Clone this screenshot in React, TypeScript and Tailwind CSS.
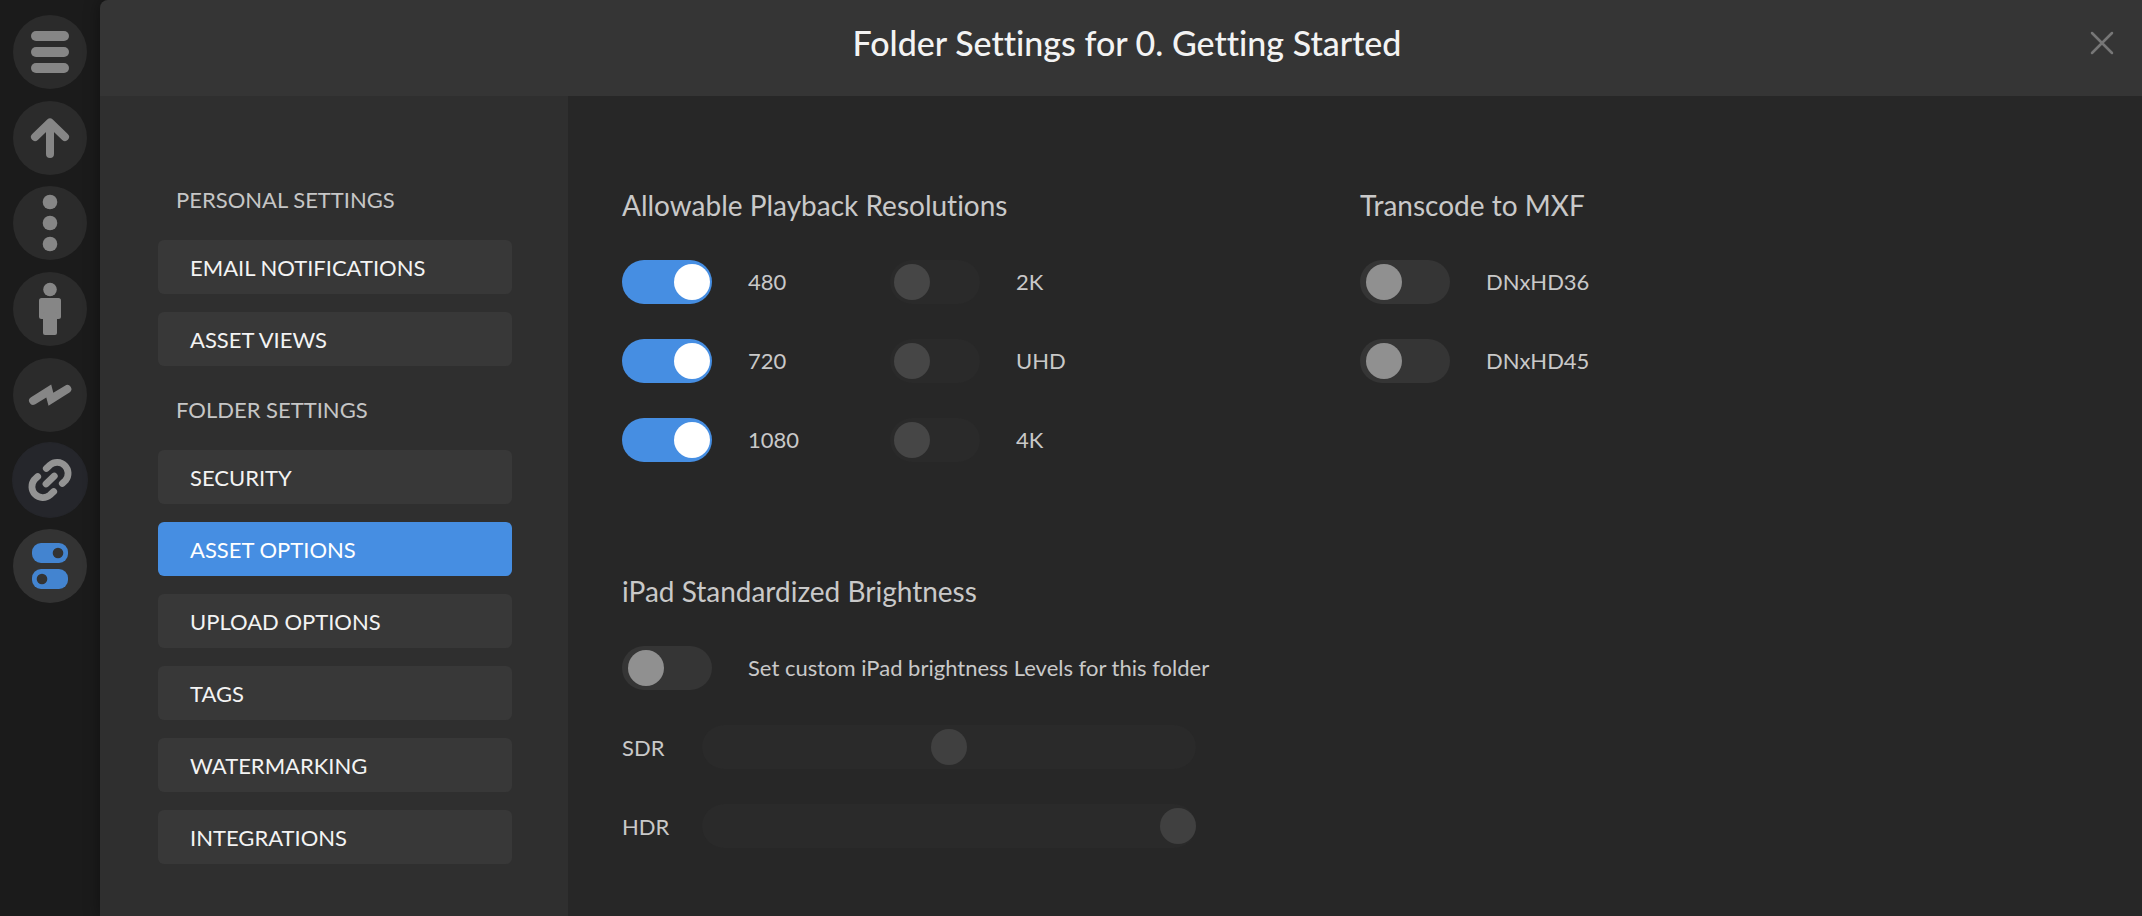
import React, { useState } from "react";
import clsx from "clsx";

type RailItem = {
  label: string;
  className: string;
  icon: React.ReactNode;
};

const railItems: RailItem[] = [
  {
    label: "Menu",
    className: "bg-[#2b2b2b] text-[#868686]",
    icon: (
      <g fill="currentColor">
        <rect x="18" y="16" width="38" height="10" rx="5" />
        <rect x="18" y="32" width="38" height="10" rx="5" />
        <rect x="18" y="48" width="38" height="10" rx="5" />
      </g>
    ),
  },
  {
    label: "Up one level",
    className: "bg-[#2b2b2b] text-[#868686]",
    icon: (
      <path
        d="M22 36 37 21.500 52 36M37 23V53"
        fill="none"
        stroke="currentColor"
        strokeWidth="8"
        strokeLinecap="round"
        strokeLinejoin="round"
      />
    ),
  },
  {
    label: "More",
    className: "bg-[#2b2b2b] text-[#868686]",
    icon: (
      <g fill="currentColor">
        <circle cx="37" cy="16" r="7.300" />
        <circle cx="37" cy="37" r="7.300" />
        <circle cx="37" cy="58" r="7.300" />
      </g>
    ),
  },
  {
    label: "People",
    className: "bg-[#2b2b2b] text-[#868686]",
    icon: (
      <g fill="currentColor">
        <circle cx="37" cy="17.500" r="6.800" />
        <rect x="26" y="26" width="22" height="21" rx="2.500" />
        <rect x="30" y="40" width="14" height="23" rx="2" />
      </g>
    ),
  },
  {
    label: "Activity",
    className: "bg-[#2b2b2b] text-[#868686]",
    icon: (
      <path
        d="M18 39.200 38.200 26.500 40.300 34.800 52 27.700A4 4 0 0 1 56.500 34.500L35.500 47.700 33.300 39.600 22.300 46.200A4 4 0 0 1 18 39.200Z"
        fill="currentColor"
      />
    ),
  },
  {
    label: "Share links",
    className: "bg-[#25262b] text-[#939393] ring-1 ring-[#25262b]",
    icon: (
      <path
        d="M33.300 25.500 37 22A11 11 0 0 1 52.500 37.500L49.300 40.500M40.700 48.500 37 52A11 11 0 0 1 21.500 36.500L24.700 33.500M33 41 41.300 33"
        fill="none"
        stroke="currentColor"
        strokeWidth="6.800"
        strokeLinecap="round"
      />
    ),
  },
  {
    label: "Settings",
    className: "bg-[#333333] text-[#4384d0]",
    icon: (
      <>
        <rect x="19" y="14" width="36" height="20" rx="9" fill="currentColor" />
        <rect x="19" y="40" width="36" height="20" rx="9" fill="currentColor" />
        <circle cx="45" cy="24" r="5.300" fill="#333333" />
        <circle cx="29" cy="50" r="5.300" fill="#333333" />
      </>
    ),
  },
];

const personalPages = ["Email Notifications", "Asset Views"];

const folderPages = [
  "Security",
  "Asset Options",
  "Upload Options",
  "Tags",
  "Watermarking",
  "Integrations",
];

type ToggleProps = {
  label: string;
  defaultChecked?: boolean;
  disabled?: boolean;
};

const Toggle: React.FC<ToggleProps> = ({ label, defaultChecked, disabled }) => (
  <label className="flex h-11 items-center gap-9">
    <input
      type="checkbox"
      defaultChecked={defaultChecked}
      disabled={disabled}
      className="flex h-11 w-[90px] shrink-0 appearance-none items-center rounded-full bg-[#353535] pl-[6px] before:size-9 before:rounded-full before:bg-[#909090] checked:bg-[#468ee2] checked:pl-[52px] checked:before:bg-white disabled:bg-[#2a2a2a] disabled:pl-1 disabled:before:bg-[#464646]"
    />
    <span>{label}</span>
  </label>
);

type BrightnessProps = {
  label: string;
  value: number;
};

const Brightness: React.FC<BrightnessProps> = ({ label, value }) => (
  <label className="flex items-center">
    <span className="w-20 shrink-0 pt-[2px]">{label}</span>
    <input
      type="range"
      min={0}
      max={100}
      defaultValue={value}
      disabled
      className="h-11 w-[494px] appearance-none rounded-full bg-[#2a2a2a] [&::-webkit-slider-thumb]:size-9 [&::-webkit-slider-thumb]:appearance-none [&::-webkit-slider-thumb]:rounded-full [&::-webkit-slider-thumb]:bg-[#404040]"
    />
  </label>
);

type NavGroupProps = {
  title: string;
  pages: string[];
  active: string;
  onSelect: (page: string) => void;
};

const NavGroup: React.FC<NavGroupProps> = ({ title, pages, active, onSelect }) => (
  <section>
    <h2 className="mb-[26px] pl-[18px] text-[22px] leading-7 text-[#c6c6c6] uppercase">{title}</h2>
    <div className="flex flex-col gap-[18px]">
      {pages.map((page) => (
        <button
          key={page}
          type="button"
          onClick={() => onSelect(page)}
          className={clsx(
            "h-[54px] rounded-md pt-[2px] pl-8 text-left text-[22px] leading-7 uppercase",
            page === active ? "bg-[#468ee2] text-white" : "bg-[#383838] text-[#f3f3f3]"
          )}
        >
          {page}
        </button>
      ))}
    </div>
  </section>
);

const App: React.FC = () => {
  const [active, setActive] = useState("Asset Options");

  return (
    <div className="flex min-h-screen bg-[#1b1b1b] font-['Lato',sans-serif] [font-variant-ligatures:none]">
      <aside className="w-[100px] shrink-0 pt-[15px]">
        <nav className="flex h-[588px] flex-col items-center justify-between">
          {railItems.map((item) => (
            <button
              key={item.label}
              type="button"
              aria-label={item.label}
              className={clsx("size-[74px] shrink-0 rounded-full", item.className)}
            >
              <svg viewBox="0 0 74 74" className="size-full">
                {item.icon}
              </svg>
            </button>
          ))}
        </nav>
      </aside>

      <main className="flex min-w-0 flex-1 flex-col overflow-clip rounded-tl-lg shadow-[0_0_16px_rgba(0,0,0,0.4)]">
        <header className="flex h-24 items-center bg-[#353535] pr-7 pb-[10px] pl-16">
          <h1 className="flex-1 text-center text-[34px] leading-10 font-medium text-[#f3f3f3]">
            Folder Settings for 0. Getting Started
          </h1>
          <button type="button" aria-label="Close" className="text-[#777777]">
            <svg viewBox="0 0 24 24" className="size-6">
              <path
                d="M2 2 22 22M22 2 2 22"
                fill="none"
                stroke="currentColor"
                strokeWidth="2.500"
                strokeLinecap="round"
              />
            </svg>
          </button>
        </header>

        <div className="flex flex-1">
          <nav className="flex w-[468px] shrink-0 flex-col gap-[30px] bg-[#2f2f2f] pt-[90px] pr-14 pl-[58px]">
            <NavGroup
              title="Personal Settings"
              pages={personalPages}
              active={active}
              onSelect={setActive}
            />
            <NavGroup
              title="Folder Settings"
              pages={folderPages}
              active={active}
              onSelect={setActive}
            />
          </nav>

          <div className="flex-1 bg-[#272727] pt-[90px] pl-[54px] text-[22px] leading-7 text-[#c9c9c9]">
            <div className="flex">
              <section className="w-[738px]">
                <h2 className="mb-9 text-[28px] leading-[38px]">Allowable Playback Resolutions</h2>
                <div className="grid grid-cols-[268px_1fr] gap-y-[35px]">
                  <Toggle label="480" defaultChecked />
                  <Toggle label="2K" disabled />
                  <Toggle label="720" defaultChecked />
                  <Toggle label="UHD" disabled />
                  <Toggle label="1080" defaultChecked />
                  <Toggle label="4K" disabled />
                </div>
              </section>

              <section>
                <h2 className="mb-9 text-[28px] leading-[38px]">Transcode to MXF</h2>
                <div className="flex flex-col gap-[35px]">
                  <Toggle label="DNxHD36" />
                  <Toggle label="DNxHD45" />
                </div>
              </section>
            </div>

            <section className="mt-[110px]">
              <h2 className="mb-9 text-[28px] leading-[38px]">iPad Standardized Brightness</h2>
              <div className="flex flex-col gap-[35px]">
                <Toggle label="Set custom iPad brightness Levels for this folder" />
                <Brightness label="SDR" value={50} />
                <Brightness label="HDR" value={100} />
              </div>
            </section>
          </div>
        </div>
      </main>
    </div>
  );
};

export default App;
